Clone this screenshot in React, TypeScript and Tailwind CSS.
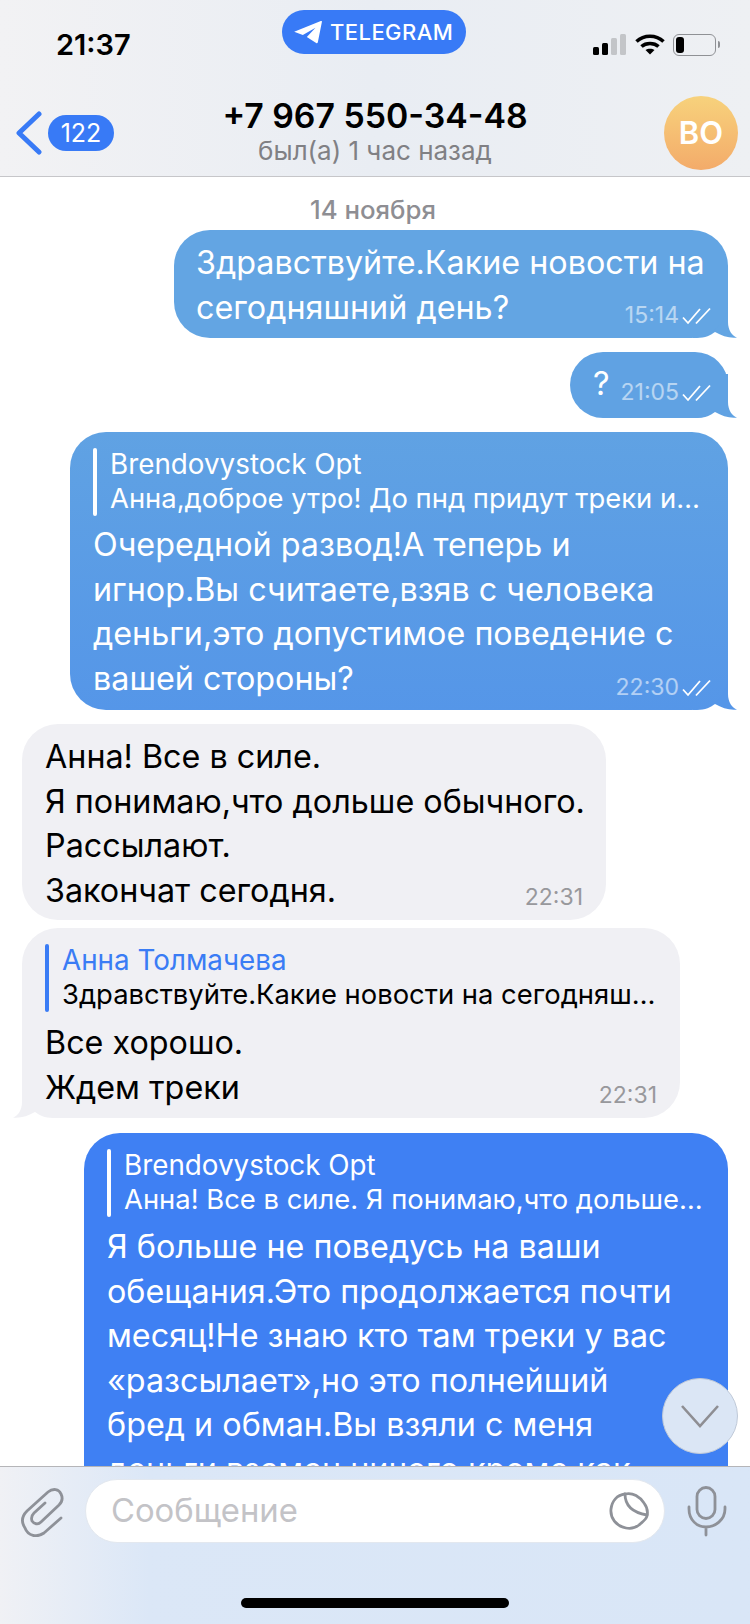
import React from 'react';

const FONT = "font-['Inter','Noto_Sans',sans-serif]";

const Checks: React.FC = () => (
    <svg width="29" height="18" viewBox="0 0 29 18" fill="none" stroke="#fff" strokeWidth="1.8" className="ml-[3px] mt-[1px]">
        <path d="M1 10.5 L6 16 L18 2" />
        <path d="M14 16.5 L28 1.5" />
    </svg>
);

// sits behind its bubble (main is isolated), so it never covers the text
const Tail: React.FC<{ color: string; left?: boolean }> = ({ color, left }) => (
    <svg
        width="44"
        height="44"
        viewBox="0 0 44 44"
        className={left ? 'absolute -z-10 -left-[9px] bottom-0 -scale-x-100' : 'absolute -z-10 -right-[9px] bottom-0'}
    >
        <path d="M35 0 L35 28 C35 36 39 42 44 43.5 C37 44.5 29 42 22 38 C18 41 12 44 4 44 L0 44 L0 0 Z" fill={color} />
    </svg>
);

const Reply: React.FC<{ name: string; text: string; incoming?: boolean; mb: string }> = ({ name, text, incoming, mb }) => (
    <div className={`flex ${mb}`}>
        <div className={`w-[4px] h-[68px] rounded-full ${incoming ? 'bg-[#3a7cf5]' : 'bg-white'}`} />
        <div className="pl-[13px] -mt-[1px] text-[27.4px] leading-[34px] whitespace-nowrap">
            <div className={`text-[27.8px] ${incoming ? 'text-[#3a7cf5]' : 'text-white'}`}>{name}</div>
            <div>{text}</div>
        </div>
    </div>
);

const Lines: React.FC<{ lines: string[] }> = ({ lines }) => (
    <div className="text-[32.3px] leading-[44.5px] whitespace-nowrap">
        {lines.map((l, i) => <div key={i}>{l}</div>)}
    </div>
);

const Meta: React.FC<{ time: string; out?: boolean; className?: string }> = ({ time, out, className }) => (
    <div className={`absolute flex items-center h-[30px] text-[23px] leading-[30px] ${out ? 'right-[17px] text-white/55' : 'right-[23px] text-[#98989c]'} ${className ?? 'bottom-[8px]'}`}>
        {time}
        {out && <Checks />}
    </div>
);

export default function App() {
    return (
        <div className={`${FONT} relative w-[750px] h-[1624px] flex flex-col overflow-hidden bg-white text-black`}>
            <header className="h-[177px] shrink-0 border-b border-[#c6c6c9] bg-gradient-to-r from-[#f2f2f4] via-[#e9edf3] to-[#eef0f3]">
                <div className="h-[96px] pt-[10px] grid grid-cols-[1fr_auto_1fr] items-start">
                    <div className="pl-[56px] pt-[20px] text-[29px] leading-[30px] font-semibold">21:37</div>
                    <div className="h-[44px] w-[184px] -translate-x-[1px] rounded-full bg-[#387af6] flex items-center pl-[10px] text-white">
                        <svg width="32" height="26" viewBox="60 58 95 78" fill="#fff">
                            <path d="M66 96 L146 64 C149 63 150 65 149 68 L137 128 C136 131 134 131 132 130 L104 112 L130 84 L92 106 Z" />
                        </svg>
                        <span className="ml-[6px] text-[22px] leading-none font-medium tracking-[0.02em]">TELEGRAM</span>
                    </div>
                    <div className="flex justify-end items-start pt-[24px] pr-[30px]">
                        <div className="flex items-end gap-[3px] h-[21px]">
                            <div className="w-[6px] h-[8px] rounded-[1.5px] bg-black" />
                            <div className="w-[6px] h-[12px] rounded-[1.5px] bg-black" />
                            <div className="w-[6px] h-[17px] rounded-[1.5px] bg-[#c3c5c8]" />
                            <div className="w-[6px] h-[21px] rounded-[1.5px] bg-[#c3c5c8]" />
                        </div>
                        <svg width="30" height="21" viewBox="0 0 30 21" fill="none" stroke="#000" strokeWidth="3.6" className="ml-[9px]">
                            <path d="M1.5 7.5 C9 0.5 21 0.5 28.5 7.5" />
                            <path d="M6.5 12.5 C11 8.5 19 8.5 23.5 12.5" />
                            <path d="M15 20.5 L10.5 16 C13 14.2 17 14.2 19.5 16 Z" fill="#000" stroke="none" />
                        </svg>
                        <div className="ml-[8px] w-[43px] h-[22px] rounded-[6px] border-[1.5px] border-[#8f9195] p-[2px]">
                            <div className="w-[8px] h-full rounded-[3px] bg-black" />
                        </div>
                        <div className="ml-[2px] mt-[7px] w-[2px] h-[7px] rounded-r-full bg-[#8f9195]" />
                    </div>
                </div>
                <div className="grid grid-cols-[1fr_auto_1fr] items-start">
                    <div className="flex items-center pl-[16px] pt-[15px]">
                        <svg width="26" height="44" viewBox="0 0 26 44" fill="none" stroke="#387af6" strokeWidth="5" strokeLinecap="round" strokeLinejoin="round">
                            <path d="M23 3 L3 22 L23 41" />
                        </svg>
                        <div className="ml-[6px] w-[66px] h-[36px] rounded-full bg-[#387af6] text-white text-[25px] leading-[36px] text-center">122</div>
                    </div>
                    <div className="text-center">
                        <div className="text-[33.8px] leading-[40px] font-semibold">+7 967 550-34-48</div>
                        <div className="text-[26px] leading-[30px] text-[#808084]">был(а) 1 час назад</div>
                    </div>
                    <div className="flex justify-end pr-[12px]">
                        <div className="w-[74px] h-[74px] rounded-full bg-gradient-to-b from-[#f7d27c] to-[#f3ab6a] text-white text-[31px] leading-[74px] font-semibold text-center">BO</div>
                    </div>
                </div>
            </header>

            <main className="isolate flex-1 min-h-0 overflow-hidden pt-[17px]">
                <div className="h-[32px] mb-[4px] -translate-x-[2px] text-center text-[25.8px] leading-[32px] font-medium text-[#8e8e93]">14 ноября</div>

                <div className="relative ml-[174px] w-[554px] rounded-[36px] bg-[#63a5e3] text-white pl-[22px] pt-[11px] pb-[8px]">
                    <Tail color="#63a5e3" />
                    <Lines lines={['Здравствуйте.Какие новости на', 'сегодняшний день?']} />
                    <Meta time="15:14" out />
                </div>

                <div className="relative ml-[570px] mt-[14px] w-[158px] h-[66px] rounded-[33px] bg-[#60a2e3] text-white pl-[23px] pt-[10px]">
                    <Tail color="#60a2e3" />
                    <Lines lines={['?']} />
                    <Meta time="21:05" out className="bottom-[11px]" />
                </div>

                <div className="relative ml-[70px] mt-[14px] w-[658px] rounded-[36px] bg-gradient-to-b from-[#60a2e3] to-[#5596e8] text-white pl-[23px] pt-[16px] pb-[9px]">
                    <Tail color="#5596e8" />
                    <Reply name="Brendovystock Opt" text="Анна,доброе утро! До пнд придут треки и…" mb="mb-[7px]" />
                    <Lines lines={['Очередной развод!А теперь и', 'игнор.Вы считаете,взяв с человека', 'деньги,это допустимое поведение с', 'вашей стороны?']} />
                    <Meta time="22:30" out />
                </div>

                <div className="relative ml-[22px] mt-[14px] w-[584px] rounded-[36px] bg-[#f0f0f4] pl-[23px] pt-[11px] pb-[7px]">
                    <Lines lines={['Анна! Все в силе.', 'Я понимаю,что дольше обычного.', 'Рассылают.', 'Закончат сегодня.']} />
                    <Meta time="22:31" />
                </div>

                <div className="relative ml-[22px] mt-[8px] w-[658px] rounded-[36px] bg-[#f0f0f4] pl-[23px] pt-[16px] pb-[8px]">
                    <Tail color="#f0f0f4" left />
                    <Reply name="Анна Толмачева" text="Здравствуйте.Какие новости на сегодняш…" incoming mb="mb-[9px]" />
                    <Lines lines={['Все хорошо.', 'Ждем треки']} />
                    <Meta time="22:31" />
                </div>

                <div className="ml-[84px] mt-[15px] w-[644px] rounded-t-[36px] bg-[#3f80f3] text-white pl-[23px] pt-[16px] pb-[60px]">
                    <Reply name="Brendovystock Opt" text="Анна! Все в силе. Я понимаю,что дольше…" mb="mb-[8px]" />
                    <Lines lines={['Я больше не поведусь на ваши', 'обещания.Это продолжается почти', 'месяц!Не знаю кто там треки у вас', '«разсылает»,но это полнейший', 'бред и обман.Вы взяли с меня', 'деньги взамен ничего кроме как']} />
                </div>
            </main>

            <div className="absolute left-[662px] top-[1378px] w-[76px] h-[76px] rounded-full bg-[#dbe6f5] border border-[#bfc9d8] flex items-center justify-center">
                <svg width="40" height="24" viewBox="0 0 40 24" fill="none" stroke="#8e8e93" strokeWidth="2.6">
                    <path d="M2 2 L20 22 L38 2" />
                </svg>
            </div>

            <footer className="h-[158px] shrink-0 border-t border-[#b5b5b8] bg-gradient-to-r from-[#f0f1f5] via-[#dbe7f7] via-[20%] to-[#d9e6f7] pt-[12px]">
                <div className="flex items-center h-[64px] pl-[18px]">
                    <svg width="48" height="52" viewBox="18 13 48 52" fill="none" stroke="#8e9198" strokeWidth="2.8" strokeLinecap="round" className="shrink-0">
                        <path d="M61 46 L44 61 C37 66 28 64 25 56 C21 50 22 44 27 39 L48 20 C53 16 59 17 61 22 C63 26 62 30 59 33 L41 50 C38 53 34 52 32 49 C31 46 32 43 34 41 L45 31" />
                    </svg>
                    <div className="ml-[19px] w-[580px] h-[64px] shrink-0 rounded-full bg-white border border-[#e3e8ef] flex items-center pl-[25px] pr-[12px]">
                        <span className="flex-1 text-[32.8px] text-[#c3c3c7]">Сообщение</span>
                        <svg width="44" height="42" viewBox="8 20 44 42" fill="none" stroke="#8e9198" strokeWidth="2.8" strokeLinecap="round">
                            <path d="M25 24 C33 22 40 27 44 33 C47 37 48 42 47 46 C46 50 42 52 39 55 C35 58 30 59 26 58 C16 56 10 48 11 39 C12 31 17 25 25 24 Z" />
                            <path d="M25 24 C25 33 29 42 47 45" />
                        </svg>
                    </div>
                    <svg width="40" height="52" viewBox="87 15 40 52" fill="none" stroke="#8e9198" strokeWidth="2.8" strokeLinecap="round" className="ml-[22px] shrink-0">
                        <rect x="97" y="17.5" width="18" height="31" rx="9" />
                        <path d="M89 37 V39 C89 50 97 57 106 57 C115 57 125 50 125 39 V37 M106 57 V65" />
                    </svg>
                </div>
                <div className="mt-[55px] ml-[241px] w-[268px] h-[10px] rounded-full bg-black" />
            </footer>
        </div>
    );
}
